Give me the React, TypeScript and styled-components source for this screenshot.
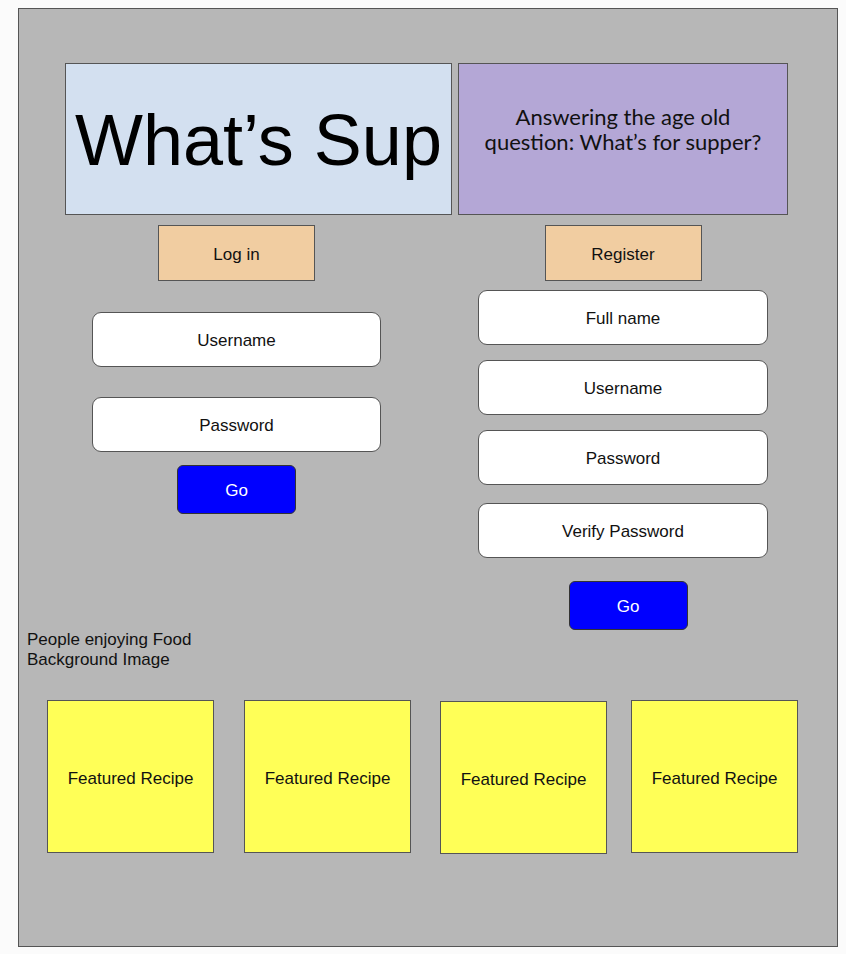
import React from "react";
import styled, { createGlobalStyle } from "styled-components";

const Global = createGlobalStyle`
  html, body { margin: 0; padding: 0; background: #fbfbfb; }
  body { font-family: "Liberation Sans", Arial, sans-serif; }
  * { box-sizing: border-box; }
`;

const Page = styled.div`
  width: 846px;
  height: 954px;
  padding: 8px 0 0 18px;
`;

const Panel = styled.div`
  width: 820px;
  height: 939px;
  background: #b7b7b7;
  border: 1px solid #555;
  padding-top: 54px;
  display: flex;
  flex-direction: column;
`;

const HeaderRow = styled.div`
  display: flex;
  gap: 6px;
  padding-left: 46px;
`;

const TitleBox = styled.div`
  width: 387px;
  height: 152px;
  background: #d3e0f0;
  border: 1px solid #555;
  display: flex;
  align-items: center;
  justify-content: center;
  font-size: 72px;
  color: #000;
  padding-top: 2px;
`;

const TaglineBox = styled.div`
  width: 330px;
  height: 152px;
  background: #b4a7d6;
  border: 1px solid #555;
  display: flex;
  align-items: center;
  justify-content: center;
  text-align: center;
  font-family: "Lato", "Open Sans", sans-serif;
  font-size: 22px;
  line-height: 25px;
  color: #111;
  padding-bottom: 20px;
`;

const FormsRow = styled.div`
  display: flex;
  gap: 97px;
  padding-left: 73px;
  margin-top: 10px;
`;

const Column = styled.div<{ $width: number }>`
  width: ${(p) => p.$width}px;
  display: flex;
  flex-direction: column;
  align-items: center;
`;

const TabButton = styled.div<{ $mt?: number }>`
  width: 157px;
  height: 56px;
  margin-top: ${(p) => p.$mt ?? 0}px;
  padding-top: 3px;
  background: #f1cda1;
  border: 1px solid #555;
  display: flex;
  align-items: center;
  justify-content: center;
  font-size: 17px;
  color: #111;
`;

const Field = styled.div<{ $mt: number }>`
  align-self: stretch;
  height: 55px;
  margin-top: ${(p) => p.$mt}px;
  padding-top: 3px;
  background: #fff;
  border: 1px solid #555;
  border-radius: 9px;
  display: flex;
  align-items: center;
  justify-content: center;
  font-size: 17px;
  color: #111;
`;

const GoButton = styled.div<{ $mt: number; $shift?: number }>`
  width: 119px;
  height: 49px;
  margin-top: ${(p) => p.$mt}px;
  margin-left: ${(p) => p.$shift ?? 0}px;
  padding-top: 3px;
  background: #0000ff;
  border: 1px solid #333;
  border-radius: 6px;
  display: flex;
  align-items: center;
  justify-content: center;
  font-size: 17px;
  color: #fff;
`;

const Caption = styled.div`
  margin-top: 0;
  padding-left: 8px;
  font-size: 17px;
  line-height: 20px;
  color: #111;
`;

const CardsRow = styled.div`
  display: flex;
  align-items: flex-start;
  padding-left: 28px;
  margin-top: 30px;
`;

const RecipeCard = styled.div<{ $ml: number; $mt?: number }>`
  width: 167px;
  height: 153px;
  margin-left: ${(p) => p.$ml}px;
  margin-top: ${(p) => p.$mt ?? 0}px;
  padding-top: 4px;
  background: #ffff57;
  border: 1px solid #555;
  display: flex;
  align-items: center;
  justify-content: center;
  font-size: 17px;
  color: #111;
`;

export default function App() {
  return (
    <>
      <Global />
      <Page>
        <Panel>
          <HeaderRow>
            <TitleBox>What’s Sup</TitleBox>
            <TaglineBox>
              Answering the age old
              <br />
              question: What’s for supper?
            </TaglineBox>
          </HeaderRow>
          <FormsRow>
            <Column $width={289}>
              <TabButton>Log in</TabButton>
              <Field $mt={31}>Username</Field>
              <Field $mt={30}>Password</Field>
              <GoButton $mt={13}>Go</GoButton>
            </Column>
            <Column $width={290}>
              <TabButton>Register</TabButton>
              <Field $mt={9}>Full name</Field>
              <Field $mt={15}>Username</Field>
              <Field $mt={15}>Password</Field>
              <Field $mt={18}>Verify Password</Field>
              <GoButton $mt={23} $shift={10}>Go</GoButton>
            </Column>
          </FormsRow>
          <Caption>
            People enjoying Food
            <br />
            Background Image
          </Caption>
          <CardsRow>
            <RecipeCard $ml={0}>Featured Recipe</RecipeCard>
            <RecipeCard $ml={30}>Featured Recipe</RecipeCard>
            <RecipeCard $ml={29} $mt={1}>Featured Recipe</RecipeCard>
            <RecipeCard $ml={24}>Featured Recipe</RecipeCard>
          </CardsRow>
        </Panel>
      </Page>
    </>
  );
}
